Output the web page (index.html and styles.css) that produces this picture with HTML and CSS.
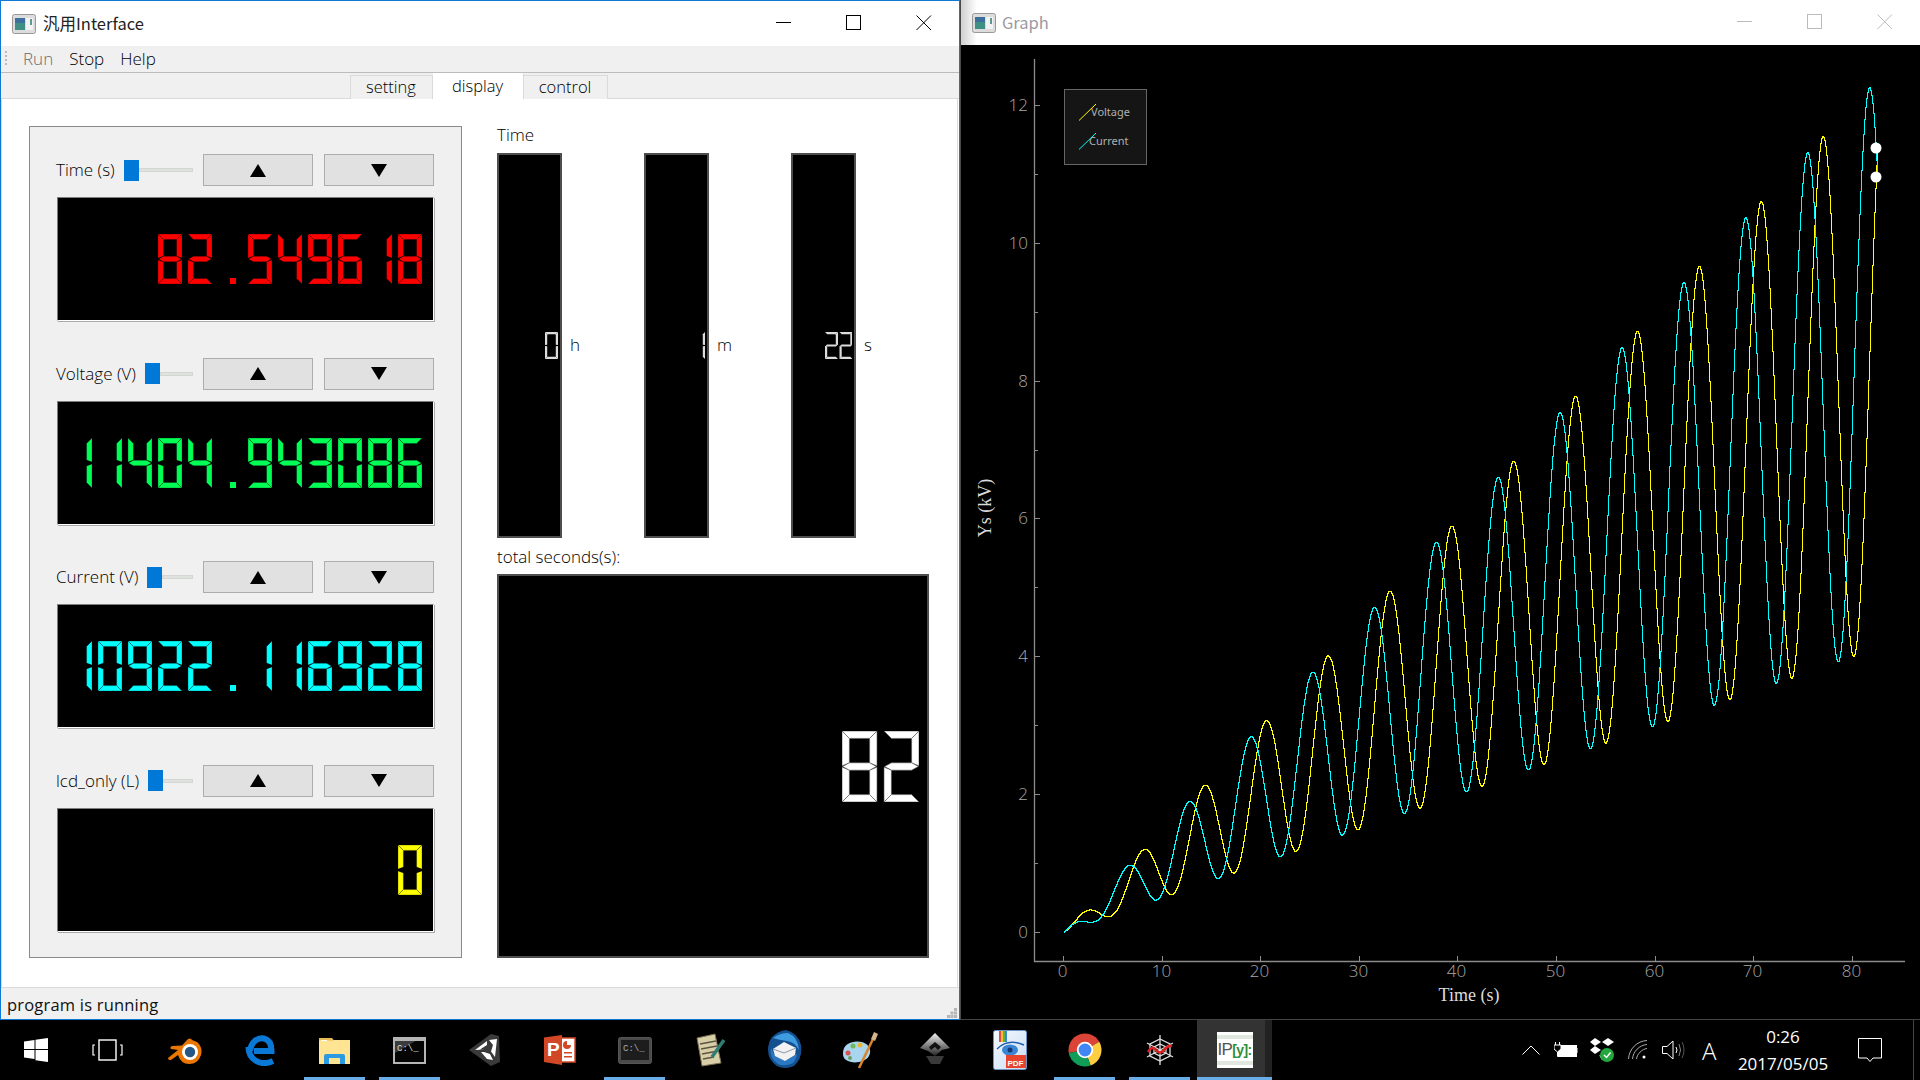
FILE: index.html
```html
<!DOCTYPE html>
<html lang="ja">
<head>
<meta charset="utf-8">
<title>汎用Interface</title>
<link rel="stylesheet" href="styles.css">
</head>
<body>
<div class="desktop">
  <div class="windows">
    <section class="window main-window">
      <header class="titlebar">
        <svg class="app-icon" width="24" height="20" viewBox="0 0 24 20"><rect x=".5" y=".5" width="23" height="19" rx="2" fill="#dcdcdc" stroke="#999"/><rect x="3" y="4" width="10" height="12" fill="#3f8f84"/><rect x="3" y="4" width="10" height="5" fill="#3d6f9c"/><rect x="14" y="4" width="7" height="12" fill="#f3f3f3"/><rect x="18" y="5" width="2" height="6" fill="#5c9a8f"/></svg>
        <span class="title">汎用Interface</span>
        <div class="controls">
          <span class="ctl"><svg width="16" height="16" viewBox="0 0 16 16"><path d="M0 7.500H15" stroke="#000" fill="none"/></svg></span>
          <span class="ctl"><svg width="16" height="16" viewBox="0 0 16 16"><rect x=".5" y=".5" width="14" height="14" stroke="#000" fill="none"/></svg></span>
          <span class="ctl"><svg width="16" height="16" viewBox="0 0 16 16"><path d="M.5 .5L15 15M15 .5L.5 15" stroke="#000" fill="none"/></svg></span>
        </div>
      </header>
      <nav class="menubar">
        <span class="grip"></span>
        <span class="menu disabled">Run</span>
        <span class="menu">Stop</span>
        <span class="menu">Help</span>
      </nav>
      <div class="tabbar">
        <span class="tab tab-setting">setting</span>
        <span class="tab tab-display active">display</span>
        <span class="tab tab-control">control</span>
      </div>
      <main class="pane">
        <div class="group">
          <div class="meter">
            <div class="meter-head">
              <label class="meter-label">Time (s)</label>
              <div class="slider"><span class="handle"></span><span class="groove"></span></div>
              <button class="btn"><span class="tri up"></span></button>
              <button class="btn"><span class="tri down"></span></button>
            </div>
            <div class="lcd meter-lcd lcd-red" data-value="82.549618" data-size="m"></div>
          </div>
          <div class="meter">
            <div class="meter-head">
              <label class="meter-label">Voltage (V)</label>
              <div class="slider"><span class="handle"></span><span class="groove"></span></div>
              <button class="btn"><span class="tri up"></span></button>
              <button class="btn"><span class="tri down"></span></button>
            </div>
            <div class="lcd meter-lcd lcd-green" data-value="11404.943086" data-size="m"></div>
          </div>
          <div class="meter">
            <div class="meter-head">
              <label class="meter-label">Current (V)</label>
              <div class="slider"><span class="handle"></span><span class="groove"></span></div>
              <button class="btn"><span class="tri up"></span></button>
              <button class="btn"><span class="tri down"></span></button>
            </div>
            <div class="lcd meter-lcd lcd-cyan" data-value="10922.116928" data-size="m"></div>
          </div>
          <div class="meter">
            <div class="meter-head">
              <label class="meter-label">lcd_only (L)</label>
              <div class="slider"><span class="handle"></span><span class="groove"></span></div>
              <button class="btn"><span class="tri up"></span></button>
              <button class="btn"><span class="tri down"></span></button>
            </div>
            <div class="lcd meter-lcd lcd-yellow" data-value="0" data-size="m"></div>
          </div>
        </div>
        <div class="readout">
          <div class="readout-label">Time</div>
          <div class="clock-row">
            <div class="unit"><div class="lcd tall-lcd" data-value="0" data-size="s"></div><span class="unit-name">h</span></div>
            <div class="unit"><div class="lcd tall-lcd" data-value="1" data-size="s"></div><span class="unit-name">m</span></div>
            <div class="unit"><div class="lcd tall-lcd" data-value="22" data-size="s"></div><span class="unit-name">s</span></div>
          </div>
          <div class="readout-label total-label">total seconds(s):</div>
          <div class="lcd total-lcd" data-value="82" data-size="l"></div>
        </div>
      </main>
      <footer class="statusbar">
        <span>program is running</span>
        <svg class="size-grip" width="10" height="10" viewBox="0 0 10 10"><path fill="#b5b5b5" d="M7 0h3v3H7zM3.500 3.500h3v3h-3zM7 3.500h3v3H7zM0 7h3v3H0zM3.500 7h3v3h-3zM7 7h3v3H7z"/></svg>
      </footer>
    </section>

    <section class="window graph-window">
      <header class="titlebar graph-titlebar">
        <svg class="app-icon" width="24" height="20" viewBox="0 0 24 20"><rect x=".5" y=".5" width="23" height="19" rx="2" fill="#dcdcdc" stroke="#999"/><rect x="3" y="4" width="10" height="12" fill="#3f8f84"/><rect x="3" y="4" width="10" height="5" fill="#3d6f9c"/><rect x="14" y="4" width="7" height="12" fill="#f3f3f3"/><rect x="18" y="5" width="2" height="6" fill="#5c9a8f"/></svg>
        <span class="title">Graph</span>
        <div class="controls">
          <span class="ctl"><svg width="16" height="16" viewBox="0 0 16 16"><path d="M0 7.500H15" stroke="#bbb" fill="none"/></svg></span>
          <span class="ctl"><svg width="16" height="16" viewBox="0 0 16 16"><rect x=".5" y=".5" width="14" height="14" stroke="#bbb" fill="none"/></svg></span>
          <span class="ctl"><svg width="16" height="16" viewBox="0 0 16 16"><path d="M.5 .5L15 15M15 .5L.5 15" stroke="#bbb" fill="none"/></svg></span>
        </div>
      </header>
      <svg id="plot" class="plot" viewBox="961 45 959 974"></svg>
    </section>
  </div>

  <div class="taskbar">
    <span class="start">
      <svg width="24" height="24" viewBox="0 0 24 24"><path fill="#fff" d="M0 3.500L10.500 2V11H0zM11.500 1.800L24 0V11H11.500zM0 12H10.500V21L0 19.500zM11.500 12H24V24L11.500 22.200z"/></svg>
    </span>
    <span class="task task-view">
      <svg width="32" height="22" viewBox="0 0 32 22"><rect x="7" y="1" width="17" height="20" fill="none" stroke="#fff" stroke-width="1.400"/><path d="M3 6H1V16H3M28 6H30V16H28" fill="none" stroke="#fff" stroke-width="1.200"/></svg>
    </span>
    <span class="task">
      <svg width="35" height="30" viewBox="0 0 35 30"><path fill="#ea7600" d="M1 23L11 15L4 14Q2.500 12 5 11L15 10.500L21 4Q24 2.500 25 5L30 7Q36 12 34 20Q31 29 22 29Q14 29 11 20L4 25Q1 25 1 23Z"/><circle cx="23" cy="17" r="8" fill="#fff"/><circle cx="23" cy="17" r="5.200" fill="#265787"/></svg>
    </span>
    <span class="task">
      <svg width="30" height="32" viewBox="0 0 30 32"><path d="M5 17C6 8 13 3 19 4.500C25 6 26.500 11 26.500 17H9" fill="none" stroke="#0a78d7" stroke-width="6"/><path d="M3.500 13C3.500 25 15 33 28 27" fill="none" stroke="#0a78d7" stroke-width="6"/></svg>
    </span>
    <span class="task open">
      <svg width="32" height="27" viewBox="0 0 32 27"><path fill="#ffe493" d="M0 3H31V27H0z"/><path fill="#e9bb55" d="M0 1H13L15 3.500H0z"/><path fill="#fff" d="M2 3h6v1H2z"/><path fill="#2b9ae0" d="M5 27V19Q5 17 7 17H24Q26 17 26 19V27H21V21H10V27Z"/></svg>
    </span>
    <span class="task open">
      <svg width="33" height="27" viewBox="0 0 33 27"><rect x="1" y="1" width="31" height="25" fill="#050505" stroke="#b5b5b5" stroke-width="2"/><path d="M2 2H26L2 16z" fill="#3c3c3c"/><path d="M2 2H31V4H2z" fill="#b5b5b5"/><text x="4" y="14" class="icon-prompt">C:\_</text></svg>
    </span>
    <span class="task">
      <svg width="32" height="34" viewBox="0 0 32 34"><path fill="#3a3a3a" d="M0 17L22 1L30 3L31 29L22 33z"/><path fill="#fff" d="M6 17L18 8V12L11 16.500H16zM20 7L28 6L26 24L22 18.500L24 12zM18 20L21 21L24 27L18 26L12 19H15z"/></svg>
    </span>
    <span class="task">
      <svg width="32" height="30" viewBox="0 0 32 30"><path fill="#fff" stroke="#d24726" stroke-width="1.500" d="M16 3H31V27H16z"/><path fill="#d24726" d="M20 17h8v1.500h-8zM20 21h8v1.500h-8zM23 6a4 4 0 1 0 4 4h-4z"/><path fill="#d24726" d="M0 2.500L18 0V30L0 27z"/><text x="3" y="21" class="icon-ppt">P</text></svg>
    </span>
    <span class="task open">
      <svg width="34" height="27" viewBox="0 0 34 27"><rect x=".5" y=".5" width="33" height="26" rx="2" fill="#4a4a4a" stroke="#555"/><rect x="3" y="3" width="28" height="20" fill="#1d1d1d"/><text x="5" y="14" class="icon-prompt2">C:\_</text></svg>
    </span>
    <span class="task">
      <svg width="30" height="34" viewBox="0 0 30 34"><path fill="#d8cfa8" stroke="#7a6f55" d="M2 5L20 1L26 30L7 33z"/><path stroke="#5d5542" stroke-width="1.500" d="M5 11L21 8M6 16L22 13M7 21L23 18M8 26L19 24"/><path stroke="#2f7d72" stroke-width="3.500" d="M17 24L29 7"/></svg>
    </span>
    <span class="task">
      <svg width="34" height="40" viewBox="0 0 34 40"><path fill="#14508f" d="M4 7Q10 1 18 0Q30 3 33 15Q35 28 26 36Q17 40 9 36Q0 30 0 20Q0 13 4 7Z"/><path fill="#3f9be0" d="M5 8Q12 3 20 3Q30 7 31 20Q27 12 19 11Q11 10 5 8Z"/><path fill="#2a78c4" d="M3 18Q1 28 10 34Q17 37 25 33Q29 28 29 24L17 31L6 24Z"/><path fill="#f2f2f2" d="M5 19L16 12L28 18L27 25L17 31L7 26Z"/><path fill="none" stroke="#8b97a8" d="M5 19L16 23L28 18"/></svg>
    </span>
    <span class="task">
      <svg width="36" height="38" viewBox="0 0 36 38"><path fill="#a9d6ee" d="M1 22C1 12 12 9 20 11C27 13 30 19 27 25C24 31 12 33 6 30C2 28 1 26 1 22Z"/><circle cx="6" cy="22" r="2.500" fill="#d9534f"/><circle cx="11" cy="15" r="2.500" fill="#72b85a"/><circle cx="18" cy="14" r="2.500" fill="#e8b72f"/><circle cx="8" cy="27" r="2" fill="#6ba05c"/><path stroke="#d9842c" stroke-width="2.500" d="M17 37L31 8"/><path fill="#d8b48a" d="M29 8L32 1L36 3L33 10z"/></svg>
    </span>
    <span class="task">
      <svg width="32" height="34" viewBox="0 0 32 34"><defs><linearGradient id="ink" x1="0" y1="0" x2="0" y2="1"><stop offset="0" stop-color="#f2f2f2"/><stop offset="1" stop-color="#222"/></linearGradient></defs><path fill="url(#ink)" d="M16 0L31 15L23 17L16 23L9 18L1 15z"/><path fill="#111" d="M16 9L22 14L19 17L16 14L12 17L10 14z"/><path fill="#3a3a3a" d="M7 23H25L21 31H12z"/></svg>
    </span>
    <span class="task">
      <span class="pdf-icon">
        <svg width="34" height="40" viewBox="0 0 34 40"><defs><linearGradient id="pdfbg" x1="0" y1="0" x2="1" y2="1"><stop offset="0" stop-color="#f5f9ff"/><stop offset="1" stop-color="#c9ddf5"/></linearGradient></defs><rect x=".5" y=".5" width="33" height="39" rx="2" fill="url(#pdfbg)" stroke="#6d93c0"/><path fill="#e64b3c" d="M6 1h2v11H6z"/><path fill="#f2c12e" d="M8 1h2v11H8z"/><path fill="#58b34a" d="M10 1h2v11h-2z"/><path fill="#3c84d6" d="M12 1h2v11h-2z"/><path fill="none" stroke="#1d5fb0" stroke-width="1.500" d="M4 19Q15 8 31 15"/><ellipse cx="17" cy="20" rx="8" ry="5.500" fill="#3c84d6"/><circle cx="17" cy="20" r="2.500" fill="#123a70"/><rect x="13" y="25" width="20" height="13" fill="#e8442d"/><text x="14.500" y="35.500" class="icon-pdf">PDF</text></svg>
      </span>
    </span>
    <span class="task open">
      <svg width="34" height="34" viewBox="0 0 34 34"><path fill="#db4437" d="M17 17L.75 19.900A16.500 16.500 0 0 1 31.300 8.750Z"/><path fill="#ffcd40" d="M17 17L31.300 8.750A16.500 16.500 0 0 1 22.600 32.500Z"/><path fill="#0f9d58" d="M17 17L22.600 32.500A16.500 16.500 0 0 1 .75 19.900Z"/><circle cx="17" cy="17" r="8.200" fill="#fff"/><circle cx="17" cy="17" r="6.400" fill="#4285f4"/></svg>
    </span>
    <span class="task open">
      <svg width="28" height="30" viewBox="0 0 28 30"><g fill="none" stroke="#ddd" stroke-width="1.300"><path d="M14 0V30M1 8L27 22M27 8L1 22"/><path d="M14 4L24 9V21L14 26L4 21V9Z"/><path d="M14 9L20 12V18L14 21L8 18V12Z"/></g><path fill="none" stroke="#e01d1d" stroke-width="2.600" d="M2 17Q6 10 10 15T18 15T26 11"/></svg>
    </span>
    <span class="task current">
      <span class="ipy"><span class="ipy-ip">IP</span><span class="ipy-y">[y]:</span></span>
    </span>
    <div class="tray">
      <span class="tray-item"><svg width="18" height="10" viewBox="0 0 18 10"><path d="M.5 9.500L9 1L17.500 9.500" fill="none" stroke="#fff"/></svg></span>
      <span class="tray-item"><svg width="24" height="16" viewBox="0 0 24 16"><rect x="4.500" y="3.500" width="18" height="11" fill="#fff" stroke="#fff"/><path d="M1.500 0V3M5.500 0V3" stroke="#fff"/><path d="M0 3H7V7L3.500 10L0 7Z" fill="#000" stroke="#fff"/><path d="M3.500 10V14.500H6" fill="none" stroke="#fff"/><path d="M23 6V11" stroke="#fff"/></svg></span>
      <span class="tray-item"><svg width="24" height="26" viewBox="0 0 24 26"><path fill="#fff" d="M5 1L11 5L5 9L0 5zM18 1L24 5L18 9L12 5zM5 9L11 13L5 17L0 13zM9 18L12 20L12 23z"/><circle cx="17" cy="18" r="7" fill="#22a83f"/><path d="M14 18L16.500 20.500L20.500 15.500" fill="none" stroke="#fff" stroke-width="1.500"/></svg></span>
      <span class="tray-item"><svg width="20" height="20" viewBox="0 0 20 20"><g fill="none" stroke="#aaa"><path d="M.5 19C1 9 9 1 19 .5"/><path d="M4.500 19C5 11.500 11.500 5 19 4.500"/><path d="M8.500 19C9 14 14 9 19 8.500"/></g><circle cx="16" cy="17" r="1.500" fill="#fff"/></svg></span>
      <span class="tray-item"><svg width="23" height="20" viewBox="0 0 23 20"><path d="M.5 6.500H5L11 1V19L5 13.500H.5Z" fill="none" stroke="#fff"/><path d="M14 7Q16 10 14 13" fill="none" stroke="#fff"/><path d="M17 4Q20 10 17 16" fill="none" stroke="#888"/><path d="M20 2Q24 10 20 18" fill="none" stroke="#555"/></svg></span>
      <span class="tray-item ime">A</span>
      <span class="clock"><span>0:26</span><span>2017/05/05</span></span>
      <span class="notify"><svg width="24" height="25" viewBox="0 0 24 25"><path d="M.5 .5H23.500V20H15L12 23.500L9 20H.5Z" fill="none" stroke="#fff"/></svg></span>
      <span class="show-desktop"></span>
    </div>
  </div>
</div>
<script src="script.js"></script>
</body>
</html>
```
FILE: styles.css
```css
* { box-sizing: border-box; }
html, body { margin: 0; padding: 0; height: 100%; overflow: hidden; background: #000; }
body { font-family: "Open Sans", "Noto Sans CJK JP", sans-serif; font-size: 17px; font-weight: 300; color: #000; }

.desktop { width: 1920px; height: 1080px; display: flex; flex-direction: column; }
.windows { height: 1020px; display: flex; }

.window { display: flex; flex-direction: column; background: #fff; }
.main-window { width: 960px; border: 1px solid #0f7ad6; }
.graph-window { flex: 1; border-left: 1px solid #4a4a4a; border-bottom: 1px solid #444; background: #000; }

.titlebar { height: 45px; flex: none; display: flex; align-items: center; background: #fff; padding-left: 11px; }
.graph-titlebar { background: linear-gradient(90deg, #d0d0d0 0, #fff 16px); }
.title { margin: 0 0 2px 7px; font-family: "Noto Sans CJK JP", sans-serif; font-size: 16.500px; font-weight: 400; color: #222; }
.graph-titlebar .title { color: #9a9aa4; margin-left: 6px; }
.controls { margin-left: auto; display: flex; }
.ctl { width: 70px; height: 45px; display: flex; align-items: center; justify-content: center; padding-bottom: 1px; }

.menubar { height: 27px; flex: none; display: flex; align-items: center; background: #f0f0f0; border-bottom: 1px solid #bcbcbc; padding: 0 0 1px 4px; }
.grip { width: 2px; height: 16px; margin-right: 16px; background: repeating-linear-gradient(#bbb 0 2px, transparent 2px 4px); }
.menu { margin-right: 16px; font-size: 17px; color: #000; }
.menu.disabled { color: #6c6c6c; }

.tabbar { height: 26px; flex: none; display: flex; justify-content: center; align-items: flex-end; padding-right: 2px; background: #f0f0f0; border-bottom: 1px solid #dadada; }
.tab { height: 24px; display: flex; align-items: center; justify-content: center; border: 1px solid #dadada; border-bottom: 0; margin-bottom: -1px; padding: 0 1px 2px 0; font-size: 16.500px; background: #f0f0f0; }
.tab-setting { width: 83px; }
.tab-display { width: 91px; }
.tab-control { width: 84px; border-left: 0; }
.tab.active { height: 26px; background: #fff; border-color: #fff #dadada #fff #fff; padding-bottom: 3px; border-left: 0; }

.pane { flex: 1; display: flex; padding: 27px 0 29px 27px; background: #fff; border-left: 1px solid #dadada; border-right: 1px solid #dadada; margin-right: 1px; }

.group { width: 433px; flex: none; display: flex; flex-direction: column; gap: 36.670px; padding: 27px 27px 0; background: #f0f0f0; border: 1px solid #8a8a8a; }
.meter { display: flex; flex-direction: column; gap: 11px; }
.meter-head { height: 32px; display: flex; align-items: center; }
.meter-label { flex: none; margin: 0 9px 1px -1px; white-space: nowrap; }
.slider { flex: 1; display: flex; align-items: center; height: 21px; margin-right: 10px; }
.handle { width: 15px; height: 21px; background: #0078d7; flex: none; }
.groove { flex: 1; height: 4px; background: #e0e2e0; border: 1px solid #d4d6d4; }
.btn { width: 110px; height: 32px; flex: none; padding: 0; display: flex; align-items: center; justify-content: center; background: #e1e1e1; border: 1px solid #adadad; }
.btn + .btn { margin-left: 11px; }
.tri { width: 0; height: 0; border-left: 8.500px solid transparent; border-right: 8.500px solid transparent; }
.tri.up { border-bottom: 13px solid #000; }
.tri.down { border-top: 13px solid #000; }

.lcd { display: flex; align-items: center; justify-content: flex-end; background: #000; fill: #fff; }
.lcd svg { display: block; flex: none; }
.meter-lcd { width: 377px; height: 124px; padding-right: 11px; border: 1px solid; border-color: #7e7e7e #fff #fff #7e7e7e; box-shadow: 1px 1px 0 #aaa; }
.lcd-red { fill: #f00; }
.lcd-green { fill: #00ff55; }
.lcd-cyan { fill: #0ff; }
.lcd-yellow { fill: #ff0; }

.readout { margin-left: 35px; width: 432px; display: flex; flex-direction: column; }
.readout-label { height: 27px; line-height: 17px; }
.total-label { height: 36px; display: flex; align-items: center; line-height: 1; }
.clock-row { display: flex; }
.unit { width: 147px; flex: none; display: flex; align-items: center; }
.tall-lcd { width: 65px; height: 385px; padding-right: 2px; border: 2px solid #4e4e4e; }
.unit-name { margin: 0 0 2px 8px; }
.total-lcd { width: 432px; height: 384px; padding-right: 8px; border: 2px solid #4e4e4e; }
.lcd[data-size="s"] svg polygon { fill: #dcdcdc; }
.lcd[data-size="l"] svg polygon { stroke: #555; stroke-width: .6; }
.lcd[data-size="m"] svg polygon { stroke: #000; stroke-opacity: .45; stroke-width: .6; }

.statusbar { flex: 1; display: flex; align-items: center; justify-content: space-between; padding: 1px 2px 0 6px; background: #f0f0f0; border-top: 1px solid #dadada; font-size: 16.500px; font-weight: 400; letter-spacing: .2px; color: #111; }
.size-grip { align-self: flex-end; margin-bottom: 1px; }

.plot { flex: 1; display: block; width: 959px; background: #000; }
.tick-label { fill: #a8a8a8; font-family: "Open Sans", sans-serif; font-weight: 300; font-size: 17px; }
.axis-title { fill: #dcdcdc; font-family: "Liberation Serif", serif; font-weight: 400; font-size: 18px; }
.legend-label { fill: #b0b0b0; font-family: "Noto Sans", sans-serif; font-weight: 400; font-size: 11px; }

.taskbar { height: 60px; flex: none; display: flex; align-items: stretch; background: #000; color: #fff; }
.start { width: 72px; flex: none; display: flex; align-items: center; justify-content: center; }
.task { width: 61px; margin: 0 7px; flex: none; display: flex; align-items: center; justify-content: center; border-top: 3px solid transparent; border-bottom: 3px solid transparent; }
.task.open { border-bottom-color: #69aee8; }
.task-view { padding-right: 4px; }
.task.current { width: 75px; margin: 0; background: linear-gradient(90deg, #333 0 68px, #222 68px); border-bottom-color: #69aee8; }
.icon-prompt { fill: #ddd; font-family: "Liberation Mono", monospace; font-weight: 400; font-size: 9px; }
.icon-prompt2 { fill: #aaa; font-family: "Liberation Mono", monospace; font-weight: 400; font-size: 9px; }
.icon-ppt { fill: #fff; font-family: "Liberation Sans", sans-serif; font-weight: 700; font-size: 19px; }
.icon-pdf { fill: #fff; font-family: "Liberation Sans", sans-serif; font-weight: 700; font-size: 8px; }
.pdf-icon { display: flex; }
.ipy { width: 36px; height: 36px; display: flex; align-items: center; justify-content: center; background: #fff; border-top: 3px solid #fff; border-bottom: 3px solid #fff; box-shadow: inset 0 4px 0 #dfe7df, inset 0 -4px 0 #dfe7df; font-family: "Liberation Sans", sans-serif; font-size: 14px; font-weight: 700; letter-spacing: -.6px; }
.ipy-ip { color: #555; font-weight: 400; font-size: 17px; }
.ipy-y { color: #2f8f3a; }

.tray { margin-left: auto; display: flex; align-items: center; }
.tray-item { width: 35.700px; display: flex; justify-content: center; align-items: center; }
.ime { font-weight: 300; font-size: 24px; color: #fff; }
.clock { width: 112px; display: flex; flex-direction: column; align-items: center; gap: 5px; font-size: 17px; font-weight: 400; line-height: 22px; color: #fff; }
.notify { width: 62px; display: flex; justify-content: center; }
.show-desktop { width: 19px; align-self: stretch; margin-left: 12px; border-left: 1px solid #444; margin-right: -12px; }
```
FILE: script.js
```js
(function () {
  var SVGNS = 'http://www.w3.org/2000/svg';
  var SIZES = {
    s: { w: 13, h: 27, t: 2.2, side: 0.8, gap: 0.5, pitch: 14.5, dot: 3 },
    m: { w: 24, h: 50, t: 5.4, side: 2.9, gap: 0.9, pitch: 30, dot: 6 },
    l: { w: 35, h: 71, t: 7.4, side: 3.7, gap: 0.6, pitch: 42, dot: 8 }
  };
  var DIGITS = ['abcdef', 'bc', 'abged', 'abgcd', 'fgbc', 'afgcd', 'afgedc', 'abc', 'abcdefg', 'abcdfg'];

  function segments(s) {
    var w = s.w, h = s.h, t = s.t, side = s.side, gap = s.gap;
    var m = h / 2, q = t / 2;
    return {
      a: [0, 0, w, 0, w - t, t, t, t],
      b: [w, 0, w, m - gap, w - t, m - side, w - t, t],
      c: [w, m + gap, w, h, w - t, h - t, w - t, m + side],
      d: [t, h - t, w - t, h - t, w, h, 0, h],
      e: [0, m + gap, t, m + side, t, h - t, 0, h],
      f: [0, 0, t, t, t, m - side, 0, m - gap],
      g: [0.6, m, t, m - q, w - t, m - q, w - 0.6, m, w - t, m + q, t, m + q]
    };
  }

  function renderLcd(el) {
    var text = el.dataset.value;
    var s = SIZES[el.dataset.size];
    var segs = segments(s);
    var width = text.length * s.pitch - (s.pitch - s.w);
    var parts = [];
    text.split('').forEach(function (ch, i) {
      var x = i * s.pitch;
      if (ch === '.') {
        parts.push('<rect x="' + (x + s.w / 2) + '" y="' + (s.h - s.dot) + '" width="' + s.dot + '" height="' + s.dot + '"/>');
        return;
      }
      DIGITS[+ch].split('').forEach(function (k) {
        var pts = segs[k].map(function (v, j) { return j % 2 ? v : v + x; }).join(' ');
        parts.push('<polygon points="' + pts + '"/>');
      });
    });
    el.setAttribute('role', 'img');
    el.setAttribute('aria-label', text);
    el.innerHTML = '<svg xmlns="' + SVGNS + '" width="' + width + '" height="' + s.h + '" viewBox="0 0 ' + width + ' ' + s.h + '">' + parts.join('') + '</svg>';
  }
  document.querySelectorAll('.lcd').forEach(renderLcd);

  var X0 = 1063, XK = 9.86, Y0 = 932, YK = 68.92, TEND = 82.55;
  function px(t) { return X0 + XK * t; }
  function py(v) { return Y0 - YK * v; }
  function voltage(t) { return 0.1 * t + 0.05 * t * Math.sin(t); }
  function current(t) { return 0.1 * t + 0.05 * t * Math.cos(t); }
  // One pixel column at a time, as the plot widget's aliased line steps.
  function curve(fn) {
    var xEnd = Math.round(px(TEND));
    var d = '';
    for (var x = X0; x <= xEnd; x++) {
      var y = Math.round(py(fn((x - X0) / XK))) + 0.5;
      d += (x === X0 ? 'M' + (x + 0.5) + ' ' + y : 'H' + (x + 0.5) + 'V' + y);
    }
    return d;
  }

  var h = [];
  var AX = '#8c8c8c';
  h.push('<path d="M1034.500 59V961.500H1905" fill="none" stroke="' + AX + '" stroke-width="1.300"/>');
  for (var v = 0; v <= 12; v++) {
    var y = Math.round(py(v)) + 0.5;
    h.push('<path d="M1035 ' + y + 'H' + (v % 2 ? 1038 : 1040) + '" stroke="' + AX + '"/>');
    if (v % 2 === 0) h.push('<text class="tick-label" x="1028" y="' + (y + 5) + '" text-anchor="end">' + v + '</text>');
  }
  for (var x = 0; x <= 80; x += 10) {
    var tx = Math.round(px(x)) + 0.5;
    h.push('<path d="M' + tx + ' 956V961" stroke="' + AX + '"/>');
    h.push('<text class="tick-label" x="' + (tx - 1) + '" y="977" text-anchor="middle">' + x + '</text>');
  }
  h.push('<text class="axis-title" x="1469" y="1001" text-anchor="middle">Time (s)</text>');
  h.push('<text class="axis-title" transform="translate(991 508) rotate(-90)" text-anchor="middle">Ys (kV)</text>');

  h.push('<path d="' + curve(voltage) + '" fill="none" stroke="#ff0" shape-rendering="crispEdges"/>');
  h.push('<path d="' + curve(current) + '" fill="none" stroke="#0ff" shape-rendering="crispEdges"/>');
  h.push('<circle cx="1876" cy="148" r="5.500" fill="#fff"/>');
  h.push('<circle cx="1876" cy="177" r="5.500" fill="#fff"/>');

  h.push('<rect x="1064.500" y="89.500" width="82" height="75" fill="#151515" stroke="#666"/>');
  h.push('<path d="M1079 120.500L1096 104" stroke="#ff0" fill="none"/>');
  h.push('<path d="M1079 149.500L1096 133" stroke="#0ff" fill="none"/>');
  h.push('<text class="legend-label" x="1091" y="115.500">Voltage</text>');
  h.push('<text class="legend-label" x="1089" y="144.500">Current</text>');
  document.getElementById('plot').innerHTML = h.join('');
})();
```
